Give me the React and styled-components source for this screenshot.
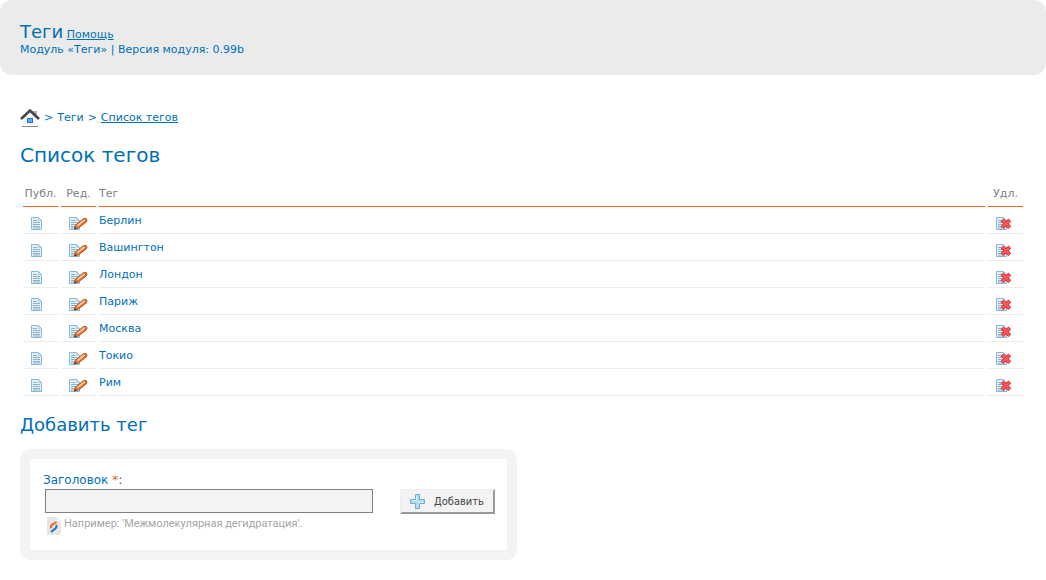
import { useState } from "react";
import styled, { createGlobalStyle } from "styled-components";

const GlobalStyle = createGlobalStyle`
  * {
    box-sizing: border-box;
  }

  body {
    margin: 0;
    background: #fff;
    color: #0070b8;
    font-family: Verdana, "DejaVu Sans", sans-serif;
    font-size: 11px;
    line-height: 14px;
  }

  a {
    color: inherit;
  }
`;

const Header = styled.header`
  padding: 21px 20px 18px;
  border-radius: 12px;
  background: #ebebeb;
`;

const ModuleTitle = styled.h1`
  display: inline;
  margin: 0;
  font-size: 18px;
  font-weight: 400;
  line-height: 22px;
`;

const ModuleInfo = styled.p`
  margin: 0;
`;

const Main = styled.main`
  padding: 33px 20px 20px;
`;

const Breadcrumbs = styled.nav`
  display: flex;
  align-items: center;
  gap: 4px;
  height: 20px;
`;

const HomeLink = styled.a`
  display: flex;
`;

const Heading = styled.h2`
  margin: ${(props) => (props.$small ? "17px 0 12px" : "15px 0 13px")};
  font-size: ${(props) => (props.$small ? "18px" : "20px")};
  font-weight: 400;
  line-height: 24px;
`;

const Table = styled.table`
  width: 100%;
  border-collapse: separate;
  border-spacing: 3px 0;
  table-layout: fixed;
`;

const Th = styled.th`
  width: ${(props) => props.$width || "auto"};
  height: 27px;
  padding: 2px 0 0;
  border-bottom: 1px solid #e0661c;
  color: #808080;
  font-weight: 400;
  text-align: ${(props) => props.$align || "center"};
  white-space: nowrap;
`;

const Td = styled.td`
  height: 27px;
  padding: ${(props) => (props.$icon ? "7px 0 0" : "2px 0 0")};
  border-bottom: 1px solid #ebebeb;
  text-align: ${(props) => (props.$icon ? "center" : "left")};
  vertical-align: middle;
`;

const TagLink = styled.a`
  text-decoration: none;
`;

const IconButton = styled.button`
  display: block;
  margin: 0 auto;
  padding: 0 ${(props) => props.$shift || "0"} 0 0;
  border: 0;
  background: none;
  cursor: pointer;

  svg {
    display: block;
  }
`;

const Form = styled.form`
  display: flex;
  align-items: flex-start;
  gap: 27px;
  width: 497px;
  max-width: 100%;
  padding: 12px 12px 15px 13px;
  border: 10px solid #f3f3f3;
  border-radius: 10px;
`;

const Field = styled.div`
  flex: 1;
`;

const Label = styled.label`
  display: block;
  height: 18px;
  font-size: 12px;
  line-height: 18px;
`;

const Required = styled.span`
  color: #e0661c;
`;

const Input = styled.input`
  display: block;
  width: calc(100% - 2px);
  height: 24px;
  margin-left: 2px;
  padding: 2px 4px;
  border: 1px solid #808080;
  border-radius: 0;
  background: #f3f3f3;
  font: inherit;
`;

const Hint = styled.div`
  display: flex;
  gap: 3px;
  padding: 4px 0 0 4px;
  color: #a6a6a6;
  font-family: Tahoma, Roboto, sans-serif;
  white-space: nowrap;
`;

const SubmitButton = styled.button`
  display: flex;
  align-items: center;
  gap: 9px;
  width: 95px;
  height: 25px;
  margin-top: 18px;
  padding: 0 0 0 8px;
  border: 2px solid;
  border-color: #f0f0f0 #999 #999 #f0f0f0;
  background: #f3f3f3;
  color: #444;
  font-family: Tahoma, "DejaVu Sans Condensed", "DejaVu Sans", sans-serif;
  font-size: 11px;
  cursor: pointer;
`;

function HomeIcon() {
  return (
    <svg width="20" height="20" viewBox="0 0 20 20">
      <path d="M12 3h5v6l-5-5z" fill="#b5b5b5" />
      <path d="M4 10l6-6 6 6v7H4z" fill="#f8f8f8" />
      <path d="M1 11L10 2.5l9 8.5" fill="none" stroke="#46434f" strokeWidth="2.6" />
      <rect x="7.5" y="10.5" width="5" height="4" fill="#55b4fa" stroke="#2f6fc4" />
      <path d="M2 18.5h16" stroke="#888" />
      <path d="M2 17.5v1M18 17.5v1" stroke="#ccc" />
    </svg>
  );
}

function Sheet() {
  return (
    <>
      <path d="M.5.5h7l3 3v9H.5z" fill="#e3f1fa" stroke="#84b9da" />
      <path d="M7.5 1v2.5H10" fill="none" stroke="#a9cfe6" />
      <path d="M2 3.5h4M2 5.5h7M2 7.5h7M2 9.5h7M2 11h7" stroke="#8fb0c5" />
    </>
  );
}

function PageIcon() {
  return (
    <svg width="11" height="13" viewBox="0 0 11 13">
      <Sheet />
    </svg>
  );
}

function EditIcon() {
  return (
    <svg width="19" height="13" viewBox="0 0 19 13">
      <Sheet />
      <path
        d="M5.5 12l.8-3.6L13.4 2.4q2.2-1.6 3.8-.8 1.6 1.4 0 3.4L9.4 11z"
        fill="#e07a38"
        stroke="#b84e14"
      />
      <path d="M8.4 8.6l7.2-5.8" stroke="#ffd0a8" strokeWidth="1.5" />
      <path d="M5.2 12.4l.6-2.4 1.8 1.6z" fill="#5f2b12" />
    </svg>
  );
}

function DeleteIcon() {
  return (
    <svg width="15" height="13" viewBox="0 0 15 13">
      <Sheet />
      <path d="M6 2.8l7.8 7.8M13.8 2.8L6 10.6" stroke="#dc3038" strokeWidth="4" />
      <path d="M6.4 3.2l7 7M13.4 3.2l-7 7" stroke="#f95a5a" strokeWidth="2" />
    </svg>
  );
}

function HintIcon() {
  return (
    <svg width="14" height="18" viewBox="0 0 14 18">
      <path d="M0 0h10l4 4v14H0z" fill="#e6e6e6" />
      <path d="M10 0v4h4z" fill="#f7f7f7" />
      <path d="M4.2 11.2q-1-2 1.2-3.6L9.6 5" fill="none" stroke="#ee6420" strokeWidth="2" />
      <path d="M9.2 8q1 2-1 3.6L4 15" fill="none" stroke="#1478be" strokeWidth="2" />
    </svg>
  );
}

function PlusIcon() {
  return (
    <svg width="15" height="15" viewBox="0 0 15 15">
      <path
        d="M5.5.5h4v5h5v4h-5v5h-4v-5h-5v-4h5z"
        fill="#b5dcf2"
        stroke="#71acd2"
      />
      <path d="M6.5 2v4.5H2M8.5 8.5H13" fill="none" stroke="#e2f3fc" />
    </svg>
  );
}

const initialTags = [
  "Берлин",
  "Вашингтон",
  "Лондон",
  "Париж",
  "Москва",
  "Токио",
  "Рим",
];

function TagRow({ name, onDelete }) {
  return (
    <tr>
      <Td $icon>
        <IconButton $shift="8px" aria-label={`Публикация: ${name}`}>
          <PageIcon />
        </IconButton>
      </Td>
      <Td $icon>
        <IconButton aria-label={`Редактировать: ${name}`}>
          <EditIcon />
        </IconButton>
      </Td>
      <Td>
        <TagLink href="#">{name}</TagLink>
      </Td>
      <Td $icon>
        <IconButton
          $shift="4px"
          aria-label={`Удалить: ${name}`}
          onClick={onDelete}
        >
          <DeleteIcon />
        </IconButton>
      </Td>
    </tr>
  );
}

function App() {
  const [tags, setTags] = useState(initialTags);
  const [title, setTitle] = useState("");

  function handleSubmit(e) {
    e.preventDefault();
    if (!title.trim()) return;
    setTags([...tags, title.trim()]);
    setTitle("");
  }

  return (
    <>
      <GlobalStyle />
      <Header>
        <ModuleTitle>Теги</ModuleTitle> <a href="#">Помощь</a>
        <ModuleInfo>Модуль «Теги» | Версия модуля: 0.99b</ModuleInfo>
      </Header>
      <Main>
        <Breadcrumbs>
          <HomeLink href="#" aria-label="Главная">
            <HomeIcon />
          </HomeLink>
          <span>&gt;</span>
          <span>Теги</span>
          <span>&gt;</span>
          <a href="#">Список тегов</a>
        </Breadcrumbs>

        <Heading>Список тегов</Heading>
        <Table>
          <thead>
            <tr>
              <Th $width="35px">Публ.</Th>
              <Th $width="35px">Ред.</Th>
              <Th $align="left">Тег</Th>
              <Th $width="35px">Удл.</Th>
            </tr>
          </thead>
          <tbody>
            {tags.map((tag) => (
              <TagRow
                key={tag}
                name={tag}
                onDelete={() => setTags(tags.filter((t) => t !== tag))}
              />
            ))}
          </tbody>
        </Table>

        <Heading $small>Добавить тег</Heading>
        <Form onSubmit={handleSubmit}>
          <Field>
            <Label htmlFor="title">
              Заголовок <Required>*</Required>:
            </Label>
            <Input
              id="title"
              type="text"
              value={title}
              onChange={(e) => setTitle(e.target.value)}
            />
            <Hint>
              <HintIcon />
              Например: 'Межмолекулярная дегидратация'.
            </Hint>
          </Field>
          <SubmitButton type="submit">
            <PlusIcon />
            Добавить
          </SubmitButton>
        </Form>
      </Main>
    </>
  );
}

export default App;
